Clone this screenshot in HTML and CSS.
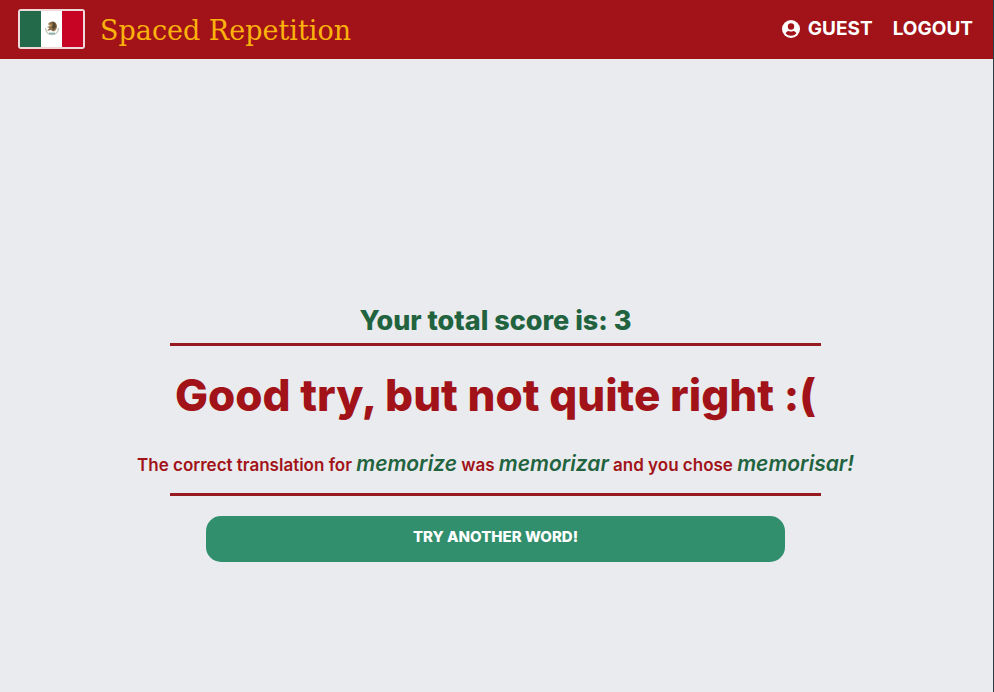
FILE: index.html
```html
<!DOCTYPE html>
<html lang="en">
<head>
<meta charset="utf-8">
<meta name="viewport" content="width=device-width, initial-scale=1">
<title>Spaced Repetition</title>
<link rel="stylesheet" href="styles.css">
</head>
<body>
<header class="header">
  <a class="brand" href="#">
    <svg class="flag" viewBox="0 0 67 40" aria-hidden="true">
      <rect width="67" height="40" rx="3" fill="#f0d9db"/>
      <path fill="#226a49" d="M2 2h21v36H2z"/>
      <path fill="#fff" d="M23 2h21v36H23z"/>
      <path fill="#c80424" d="M44 2h21v36H44z"/>
      <path d="M27.500 19q.5 6.500 6.500 6.500t6.500-6.500" fill="none" stroke="#c3cbb8" stroke-width="1.400"/>
      <path d="M31 24.500h6" stroke="#8fb4ae" stroke-width="1.800"/>
      <path fill="#8d6f4b" d="M30 15q2-3 5-2.500 4 .5 4 5.500-1 4-4 4.500l-2-1.500-4 1 2.500-3-2.500-1 3-1z"/>
      <path fill="#5a4630" d="M34 13q4 0 4 5l-3 3-1-3 1-2z"/>
      <path fill="#c2a163" d="M31 15l3 1-2 2z"/>
    </svg>
    <span class="brand-name">Spaced Repetition</span>
  </a>
  <nav class="nav">
    <a class="nav-link" href="#">
      <svg class="user" viewBox="0 0 18 18" aria-hidden="true">
        <circle cx="9" cy="9" r="9" fill="#fff"/>
        <circle cx="9" cy="6.500" r="3.200" fill="#a11318"/>
        <path fill="#a11318" d="M3.500 13.200Q5 11 6.800 11q2.200 1 4.400 0 1.800 0 3.300 2.200Q12.500 15.800 9 15.800T3.500 13.200z"/>
      </svg>
      GUEST
    </a>
    <a class="nav-link" href="#">LOGOUT</a>
  </nav>
</header>
<main class="main">
  <section class="result">
    <p class="score">Your total score is: 3</p>
    <hr class="rule">
    <h1 class="verdict">Good try, but not quite right :(</h1>
    <p class="answer">The correct translation for <em>memorize</em> was <em>memorizar</em> and you chose <em>memorisar!</em></p>
    <hr class="rule">
    <button class="next" type="button">TRY ANOTHER WORD!</button>
  </section>
</main>
</body>
</html>
```
FILE: styles.css
```css
* {
  box-sizing: border-box;
}

body {
  display: flex;
  flex-direction: column;
  min-height: 100vh;
  margin: 0;
  border-right: 1px solid #2b3d47;
  background: #e9ebee;
  color: #a11318;
  font-family: Inter, "Liberation Sans", sans-serif;
}

.header {
  display: flex;
  align-items: center;
  justify-content: space-between;
  padding: 9px 20px 10px 18px;
  background: #a11318;
}

.brand {
  display: flex;
  align-items: center;
  gap: 15px;
  color: #fbb20d;
  text-decoration: none;
}

.flag {
  width: 67px;
  height: 40px;
}

.brand-name {
  padding-top: 4px;
  font-family: "DejaVu Serif", serif;
  font-size: 27px;
  line-height: 32px;
}

.nav,
.nav-link {
  display: flex;
  align-items: center;
}

.nav {
  gap: 20px;
}

.nav-link {
  gap: 8px;
  color: #fff;
  font-size: 19px;
  font-weight: 700;
  line-height: 24px;
  text-decoration: none;
}

.user {
  width: 18px;
  height: 18px;
}

.main {
  display: flex;
  flex: 1;
  flex-direction: column;
  align-items: center;
  justify-content: flex-end;
  padding: 0 2px 130px 0;
}

.result {
  display: flex;
  flex-direction: column;
  align-items: center;
  width: 73%;
  text-align: center;
}

.score {
  margin: 0 0 8px;
  color: #22633f;
  font-size: 27px;
  font-weight: 800;
  line-height: 28px;
}

.rule {
  width: 90%;
  margin: 0;
  border: 0;
  border-top: 3px solid #961a20;
}

.verdict {
  margin: 25px 0 31px;
  font-size: 44px;
  font-weight: 800;
  line-height: 48px;
}

.answer {
  margin: 0 0 14px;
  font-size: 17px;
  font-weight: 600;
  line-height: 28px;
  white-space: nowrap;
}

.answer em {
  color: #22633f;
  font-size: 21px;
}

.next {
  width: 80%;
  margin-top: 20px;
  padding: 11px 16px 15px;
  border: 0;
  border-radius: 15px;
  background: #318f6d;
  color: #fff;
  font: 800 15px/20px Inter, "Liberation Sans", sans-serif;
}
```
